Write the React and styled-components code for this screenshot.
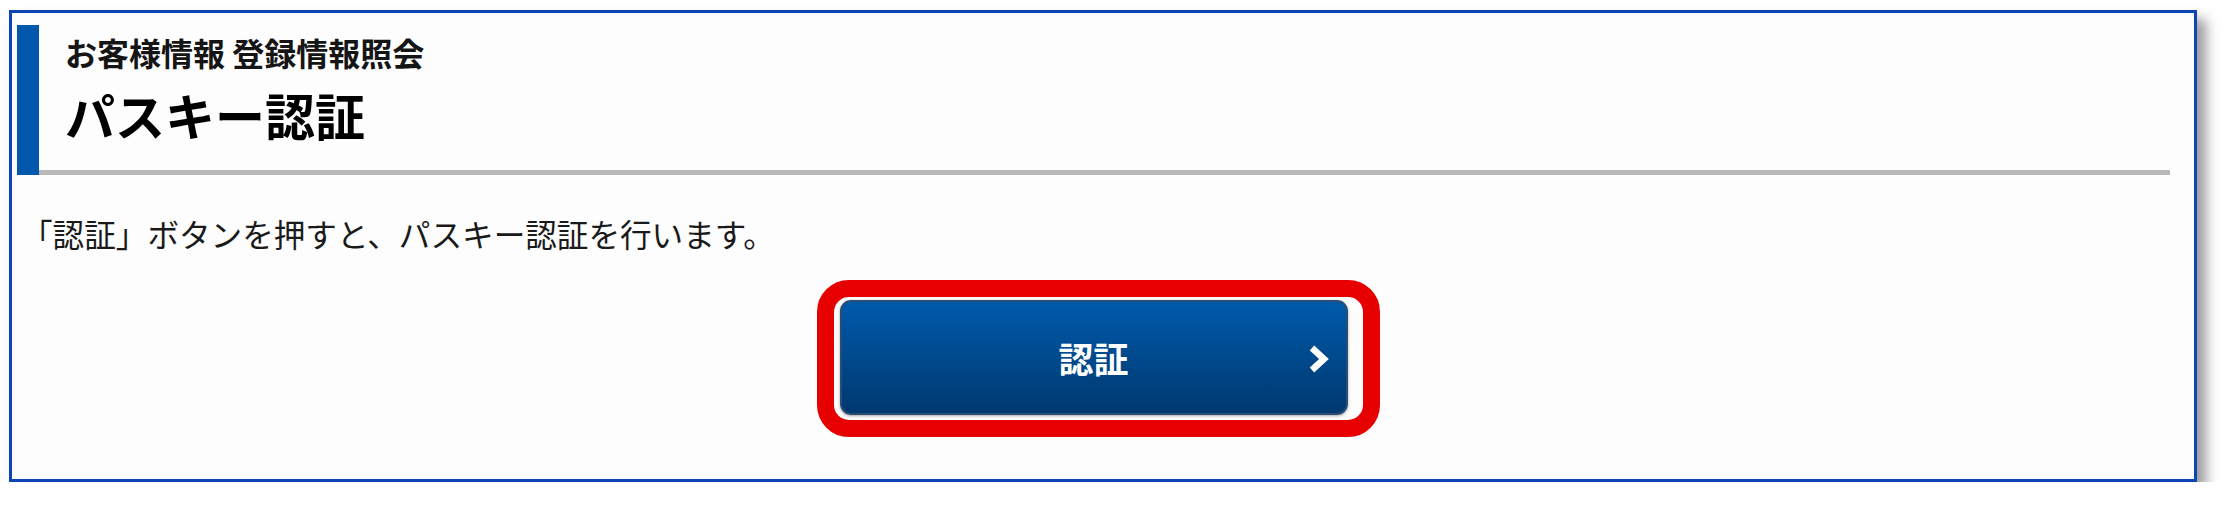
import React from 'react'
import styled, { createGlobalStyle } from 'styled-components'

const GlobalStyle = createGlobalStyle`
  html, body {
    margin: 0;
    padding: 0;
    background: #ffffff;
  }
  body {
    font-family: "Noto Sans CJK JP", "Noto Sans", sans-serif;
    color: #111;
  }
`

const Page = styled.div`
  padding: 10px 0 0 9px;
`

const Frame = styled.section`
  width: 2188px;
  box-sizing: border-box;
  border: 3px solid #0b46b4;
  background: #fdfdfd;
  box-shadow: 9px 9px 12px rgba(0, 0, 0, 0.4);
  padding: 12px 24px 64px 5px;
`

const Header = styled.header`
  border-left: 22px solid #0057ac;
`

const HeaderText = styled.div`
  border-bottom: 5px solid #b9b9b9;
  padding: 9px 0 26px 26px;
`

const SubTitle = styled.p`
  margin: 0;
  font-size: 32px;
  line-height: 36px;
  font-weight: 700;
  color: #151515;
`

const Title = styled.h1`
  margin: 14px 0 0;
  font-size: 50px;
  line-height: 60px;
  font-weight: 700;
  color: #000;
`

const Lead = styled.p`
  margin: 38px 0 0;
  padding-left: 4px;
  font-size: 31.6px;
  line-height: 40px;
  color: #1a1a1a;
`

const ButtonRow = styled.div`
  display: flex;
  justify-content: center;
  margin-top: 47px;
`

// red annotation ring drawn around the button
const Highlight = styled.div`
  position: relative;

  &::before {
    content: "";
    position: absolute;
    left: -23px;
    right: -32px;
    top: -20px;
    bottom: -22px;
    border: 17px solid #e60000;
    border-radius: 32px;
    pointer-events: none;
  }
`

const AuthButton = styled.button`
  position: relative;
  display: flex;
  align-items: center;
  justify-content: center;
  width: 508px;
  height: 115px;
  border: 2px solid #2b4d74;
  border-radius: 11px;
  background: linear-gradient(#005aab, #00386f);
  box-shadow: 0 1px 3px rgba(0, 0, 0, 0.35);
  color: #fff;
  font-family: inherit;
  font-size: 35px;
  font-weight: 700;
  cursor: pointer;
`

const Chevron = styled.svg`
  position: absolute;
  right: 16px;
  top: 50%;
  margin-top: -13px;
`

const App = () => {
  return (
    <Page>
      <GlobalStyle />
      <Frame>
        <Header>
          <HeaderText>
            <SubTitle>お客様情報 登録情報照会</SubTitle>
            <Title>パスキー認証</Title>
          </HeaderText>
        </Header>
        <Lead>「認証」ボタンを押すと、パスキー認証を行います。</Lead>
        <ButtonRow>
          <Highlight>
            <AuthButton type="button">
              認証
              <Chevron width="22" height="28" viewBox="0 0 22 28">
                <polyline points="4,3 16,14 4,25" fill="none" stroke="#fff" strokeWidth="6.5" />
              </Chevron>
            </AuthButton>
          </Highlight>
        </ButtonRow>
      </Frame>
    </Page>
  )
}

export default App
